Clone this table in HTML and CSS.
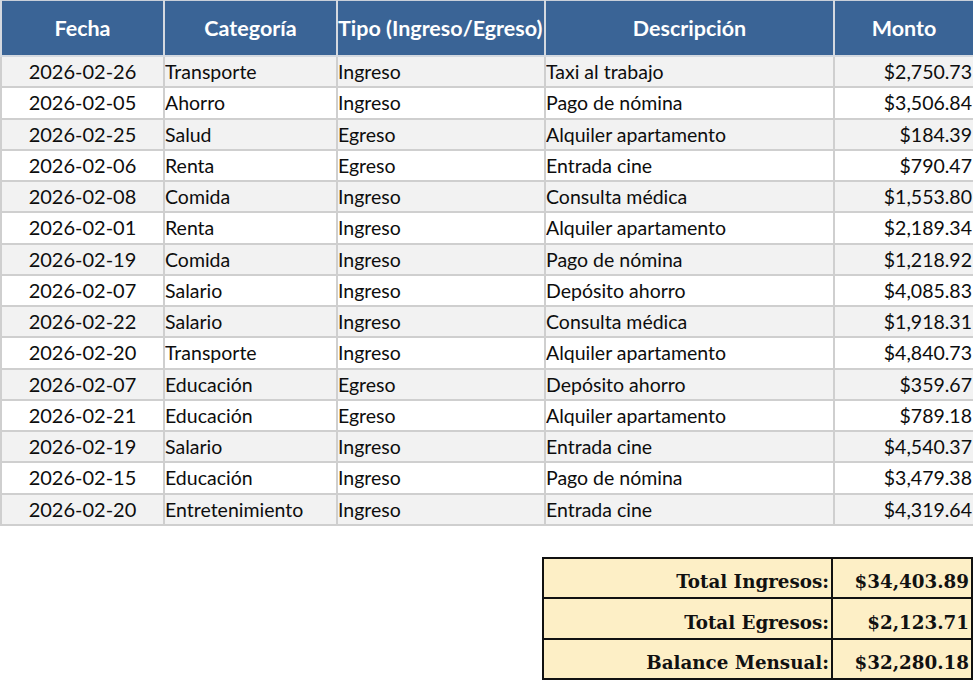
FILE: index.html
```html
<!DOCTYPE html>
<html lang="es">
<head>
<meta charset="utf-8">
<title>Finanzas</title>
<link rel="stylesheet" href="styles.css">
</head>
<body>
<table class="ledger">
  <colgroup>
    <col class="c-fecha"><col class="c-cat"><col class="c-tipo"><col class="c-desc"><col class="c-monto">
  </colgroup>
  <thead>
    <tr><th>Fecha</th><th>Categoría</th><th class="tipo">Tipo (Ingreso/Egreso)</th><th>Descripción</th><th>Monto</th></tr>
  </thead>
  <tbody>
    <tr><td class="date">2026-02-26</td><td>Transporte</td><td>Ingreso</td><td>Taxi al trabajo</td><td class="num">$2,750.73</td></tr>
    <tr><td class="date">2026-02-05</td><td>Ahorro</td><td>Ingreso</td><td>Pago de nómina</td><td class="num">$3,506.84</td></tr>
    <tr><td class="date">2026-02-25</td><td>Salud</td><td>Egreso</td><td>Alquiler apartamento</td><td class="num">$184.39</td></tr>
    <tr><td class="date">2026-02-06</td><td>Renta</td><td>Egreso</td><td>Entrada cine</td><td class="num">$790.47</td></tr>
    <tr><td class="date">2026-02-08</td><td>Comida</td><td>Ingreso</td><td>Consulta médica</td><td class="num">$1,553.80</td></tr>
    <tr><td class="date">2026-02-01</td><td>Renta</td><td>Ingreso</td><td>Alquiler apartamento</td><td class="num">$2,189.34</td></tr>
    <tr><td class="date">2026-02-19</td><td>Comida</td><td>Ingreso</td><td>Pago de nómina</td><td class="num">$1,218.92</td></tr>
    <tr><td class="date">2026-02-07</td><td>Salario</td><td>Ingreso</td><td>Depósito ahorro</td><td class="num">$4,085.83</td></tr>
    <tr><td class="date">2026-02-22</td><td>Salario</td><td>Ingreso</td><td>Consulta médica</td><td class="num">$1,918.31</td></tr>
    <tr><td class="date">2026-02-20</td><td>Transporte</td><td>Ingreso</td><td>Alquiler apartamento</td><td class="num">$4,840.73</td></tr>
    <tr><td class="date">2026-02-07</td><td>Educación</td><td>Egreso</td><td>Depósito ahorro</td><td class="num">$359.67</td></tr>
    <tr><td class="date">2026-02-21</td><td>Educación</td><td>Egreso</td><td>Alquiler apartamento</td><td class="num">$789.18</td></tr>
    <tr><td class="date">2026-02-19</td><td>Salario</td><td>Ingreso</td><td>Entrada cine</td><td class="num">$4,540.37</td></tr>
    <tr><td class="date">2026-02-15</td><td>Educación</td><td>Ingreso</td><td>Pago de nómina</td><td class="num">$3,479.38</td></tr>
    <tr><td class="date">2026-02-20</td><td>Entretenimiento</td><td>Ingreso</td><td>Entrada cine</td><td class="num">$4,319.64</td></tr>
  </tbody>
</table>

<div class="summary-wrap">
  <table class="summary">
    <colgroup><col class="s-label"><col class="s-value"></colgroup>
    <tr><td>Total Ingresos:</td><td>$34,403.89</td></tr>
    <tr><td>Total Egresos:</td><td>$2,123.71</td></tr>
    <tr><td>Balance Mensual:</td><td>$32,280.18</td></tr>
  </table>
</div>
</body>
</html>
```

FILE: styles.css
```css
html, body {
  margin: 0;
  padding: 0;
  background: #ffffff;
}

body {
  font-family: Lato, "Noto Sans", sans-serif;
  color: #0d0d0d;
  width: 973px;
}

.ledger {
  border-collapse: collapse;
  table-layout: fixed;
  width: 973px;
}

.c-fecha { width: 163px; }
.c-cat { width: 173px; }
.c-tipo { width: 208px; }
.c-desc { width: 289px; }
.c-monto { width: 140px; }

.ledger th {
  background: #3a6496;
  color: #ffffff;
  font-weight: 700;
  font-size: 21.5px;
  height: 54px;
  padding: 0;
  text-align: center;
  border: 2px solid #d4d9e0;
  border-top: 1px solid #c8cfd9;
  white-space: nowrap;
}

.ledger th.tipo {
  text-align: left;
  padding-left: 0;
}

.ledger td {
  height: 29.25px;
  padding: 0;
  font-size: 19.5px;
  border: 2px solid #cfcfcf;
  white-space: nowrap;
  overflow: hidden;
  line-height: 29px;
}

.ledger tbody tr:nth-child(odd) td {
  background: #f2f2f2;
}

.ledger tbody tr:nth-child(even) td {
  background: #ffffff;
}

.ledger td.date {
  text-align: center;
  font-size: 20px;
}

.ledger td.num {
  text-align: right;
  padding: 0 1px 0 0;
}

.summary-wrap {
  display: flex;
  justify-content: flex-end;
  margin-top: 31px;
}

.summary {
  border-collapse: collapse;
  table-layout: fixed;
  width: 429px;
}

.s-label { width: 289px; }
.s-value { width: 140px; }

.summary td {
  background: #fdefc6;
  border: 2px solid #111111;
  height: 38.5px;
  padding: 0 2px 0 0;
  text-align: right;
  vertical-align: bottom;
  font-family: "DejaVu Serif", "Liberation Serif", serif;
  font-weight: 700;
  font-size: 18.3px;
  line-height: 30px;
  color: #111111;
}
```
